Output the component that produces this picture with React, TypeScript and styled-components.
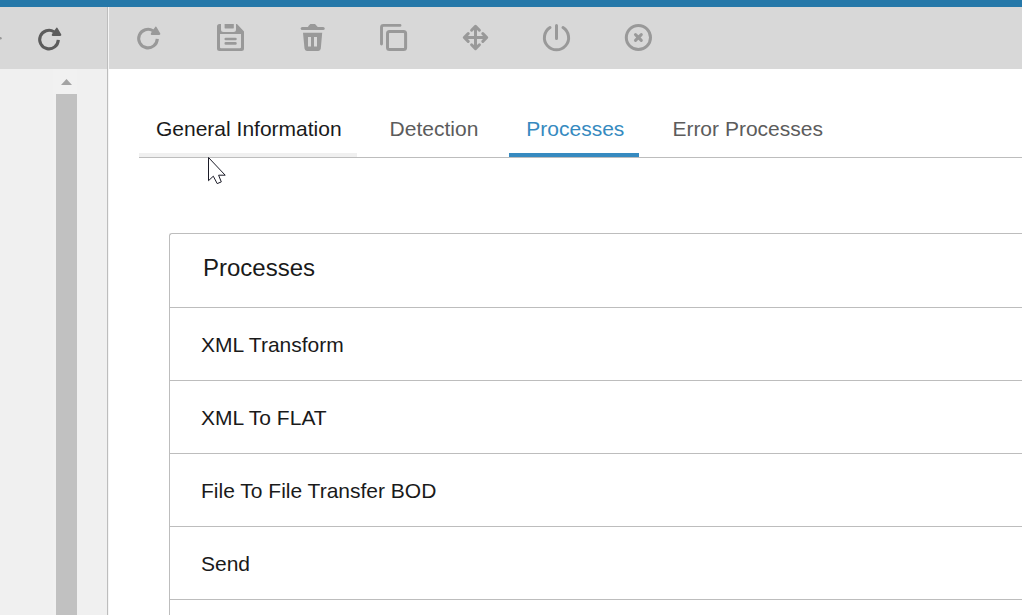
import React from "react";
import styled, { createGlobalStyle } from "styled-components";

const Global = createGlobalStyle`
  *, *::before, *::after { box-sizing: border-box; }
  body {
    margin: 0;
    background: #ffffff;
    color: #1a1a1a;
    font-family: "Liberation Sans", Arial, sans-serif;
    font-size: 21px;
    line-height: 24px;
  }
`;

const Shell = styled.div`
  display: flex;
  flex-direction: column;
  height: 100vh;
  overflow: hidden;
`;

const TopBar = styled.header`
  flex: none;
  height: 7px;
  background: #2578a9;
`;

const Columns = styled.div`
  display: flex;
  flex: 1;
  min-height: 0;
`;

const Sidebar = styled.aside`
  display: flex;
  flex-direction: column;
  flex: none;
  width: 108px;
  background: #f0f0f0;
  border-right: 1px solid #bdbdbd;
`;

const Content = styled.main`
  display: flex;
  flex-direction: column;
  flex: 1;
  min-width: 0;
  border-left: 1px solid #f5f5f5;
`;

const Toolbar = styled.div<{ $end?: boolean }>`
  display: flex;
  flex: none;
  align-items: center;
  justify-content: ${(p) => (p.$end ? "flex-end" : "flex-start")};
  gap: ${(p) => (p.$end ? "0" : "42px")};
  height: 62px;
  padding: ${(p) => (p.$end ? "0 38px 0 0" : "0 18px")};
  overflow: hidden;
  background: #d8d8d8;
`;

const IconButton = styled.button<{ $active?: boolean }>`
  display: flex;
  flex: none;
  align-items: center;
  justify-content: center;
  width: 40px;
  height: 40px;
  padding: 0;
  border: 0;
  background: transparent;
  color: ${(p) => (p.$active ? "#5c5c5c" : "#999999")};
`;

const ScrollTrack = styled.div`
  display: flex;
  flex: 1;
  flex-direction: column;
  align-self: flex-end;
  width: 24px;
  margin-right: 30px;
  padding: 10px 0 0 3px;
  background: #f1f1f1;
`;

const ScrollArrow = styled.svg`
  flex: none;
  width: 21px;
  height: 15px;
`;

const ScrollThumb = styled.div`
  flex: 1;
  background: #c1c1c1;
`;

const TabBar = styled.div`
  position: relative;
  display: flex;
  flex: none;
  gap: 16px;
  margin: 36px 0 0 30px;
  border-bottom: 1px solid #bdbdbd;
`;

const tabColors = {
  hover: { text: "#1a1a1a", line: "#f0f0f0" },
  selected: { text: "#368ac0", line: "#368ac0" },
  normal: { text: "#5c5c5c", line: "transparent" },
};

const Tab = styled.button<{ $look: keyof typeof tabColors }>`
  height: 52px;
  padding: 0 15px 0 17px;
  border: 0;
  border-bottom: 4px solid ${(p) => tabColors[p.$look].line};
  background: transparent;
  color: ${(p) => tabColors[p.$look].text};
  font: inherit;
  white-space: nowrap;
`;

const Pointer = styled.svg`
  position: absolute;
  top: 52px;
  left: 69px;
  width: 20px;
  height: 30px;
`;

const Panel = styled.section`
  display: flex;
  flex: 1;
  flex-direction: column;
  margin: 75px 0 0 60px;
  border: solid #bdbdbd;
  border-width: 1px 0 0 1px;
  border-radius: 3px 0 0 0;
`;

const PanelTitle = styled.h2`
  margin: 0;
  padding: 20px 33px 25px;
  border-bottom: 1px solid #bdbdbd;
  font-size: 24px;
  font-weight: 400;
  line-height: 28px;
`;

const List = styled.ul`
  margin: 0;
  padding: 0;
  list-style: none;
`;

const Item = styled.li`
  padding: 25px 31px 23px;
  border-bottom: 1px solid #bdbdbd;
`;

const Icon = ({ children }: { children: React.ReactNode }) => (
  <svg width="32" height="32" viewBox="0 0 32 32" fill="none" stroke="currentColor" aria-hidden="true">
    {children}
  </svg>
);

const Reload = ({ y }: { y: number }) => (
  <g transform={`translate(0 ${y})`}>
    <path d="M26.3 17.9A9.3 9.3 0 1 1 22 9.7" strokeWidth="3.1" />
    <path d="M24.6 5.4Q25.4 5.4 25.8 6.4L29.3 12.6Q29.6 14 28.2 14H20.6Q19.4 13.8 19.8 12.4L21.6 9.6Z" fill="currentColor" stroke="none" />
  </g>
);

const tools = [
  { label: "Refresh", art: <Reload y={-1} /> },
  {
    label: "Save",
    art: (
      <>
        <path
          fill="currentColor"
          stroke="none"
          fillRule="evenodd"
          d="M6.5 2H8V7.5Q8 10 10.5 10H20.5Q23 10 23 7.5V2H24L31 9.5V26.5Q31 29 28.5 29H6.5Q4 29 4 26.5V4.5Q4 2 6.5 2ZM7 12V25.2Q7 26.2 8 26.2H27Q28 26.2 28 25.2V12Z"
        />
        <path fill="currentColor" stroke="none" d="M11.6 2H20.8V5.4Q20.8 6.6 19.6 6.6H12.8Q11.6 6.6 11.6 5.4Z" />
        <path d="M12.8 17H22.4M12.8 21.4H22.4" strokeWidth="2.7" strokeLinecap="round" />
      </>
    ),
  },
  {
    label: "Delete",
    art: (
      <>
        <path d="M7.2 6.5H28.2" strokeWidth="3" strokeLinecap="round" />
        <path fill="currentColor" stroke="none" d="M13 6V4.5L15.3 2H20L22.3 4.5V6Z" />
        <path
          fill="currentColor"
          stroke="none"
          fillRule="evenodd"
          d="M8 10.8H27.2L25.8 26.6Q25.5 29 23.3 29H12Q9.8 29 9.5 26.6ZM13 15V24.5H16V15ZM19 15V24.5H22V15Z"
        />
      </>
    ),
  },
  {
    label: "Copy",
    art: (
      <>
        <path d="M23 3.4H6.5Q4.5 3.4 4.5 5.4V22" strokeWidth="2.9" strokeLinecap="round" />
        <rect x="10.5" y="9.5" width="18.1" height="18.1" rx="2" strokeWidth="3" />
      </>
    ),
  },
  {
    label: "Move",
    art: (
      <path
        d="M16.5 5V26M6 15.5H27M12.6 8.2L16.5 4.3L20.4 8.2M12.6 22.8L16.5 26.7L20.4 22.8M9.2 11.6L5.3 15.5L9.2 19.4M23.8 11.6L27.7 15.5L23.8 19.4"
        strokeWidth="3"
        strokeLinecap="round"
        strokeLinejoin="round"
      />
    ),
  },
  {
    label: "Power",
    art: <path d="M15.5 3.4V16.4M9 5.5A12.1 12.1 0 1 0 22 5.5" strokeWidth="3" strokeLinecap="round" />,
  },
  {
    label: "Close",
    art: (
      <>
        <circle cx="15.4" cy="15.5" r="12.1" strokeWidth="3" />
        <path d="M12.5 12.6L18.3 18.4M18.3 12.6L12.5 18.4" strokeWidth="3" strokeLinecap="round" />
      </>
    ),
  },
];

const tabs: { label: string; look: keyof typeof tabColors }[] = [
  { label: "General Information", look: "hover" },
  { label: "Detection", look: "normal" },
  { label: "Processes", look: "selected" },
  { label: "Error Processes", look: "normal" },
];

const processes = ["XML Transform", "XML To FLAT", "File To File Transfer BOD", "Send"];

export default function App() {
  return (
    <Shell>
      <Global />
      <TopBar />
      <Columns>
        <Sidebar>
          <Toolbar $end>
            <IconButton aria-label="Next">
              <Icon>
                <path d="M2 16.3H7.5" strokeWidth="2.4" strokeLinecap="round" />
              </Icon>
            </IconButton>
            <IconButton $active aria-label="Refresh list">
              <Icon>
                <g transform="translate(-1 0)">
                  <Reload y={0} />
                </g>
              </Icon>
            </IconButton>
          </Toolbar>
          <ScrollTrack>
            <ScrollArrow viewBox="0 0 21 15" aria-hidden="true">
              <path d="M10.5 0L16 6H5Z" fill="#a3a3a3" />
            </ScrollArrow>
            <ScrollThumb />
          </ScrollTrack>
        </Sidebar>
        <Content>
          <Toolbar role="toolbar">
            {tools.map((tool) => (
              <IconButton key={tool.label} aria-label={tool.label}>
                <Icon>{tool.art}</Icon>
              </IconButton>
            ))}
          </Toolbar>
          <TabBar role="tablist">
            {tabs.map((tab) => (
              <Tab key={tab.label} role="tab" aria-selected={tab.look === "selected"} $look={tab.look}>
                {tab.label}
              </Tab>
            ))}
            <Pointer viewBox="0 0 20 30" aria-hidden="true">
              <path
                d="M0.5 0.5V23.7L5.3 19.2L9.2 26.6L13.3 24.9L10.6 18.2H17.2Z"
                fill="#ffffff"
                stroke="#1c1c28"
                strokeWidth="1"
              />
            </Pointer>
          </TabBar>
          <Panel>
            <PanelTitle>Processes</PanelTitle>
            <List>
              {processes.map((name) => (
                <Item key={name}>{name}</Item>
              ))}
            </List>
          </Panel>
        </Content>
      </Columns>
    </Shell>
  );
}
